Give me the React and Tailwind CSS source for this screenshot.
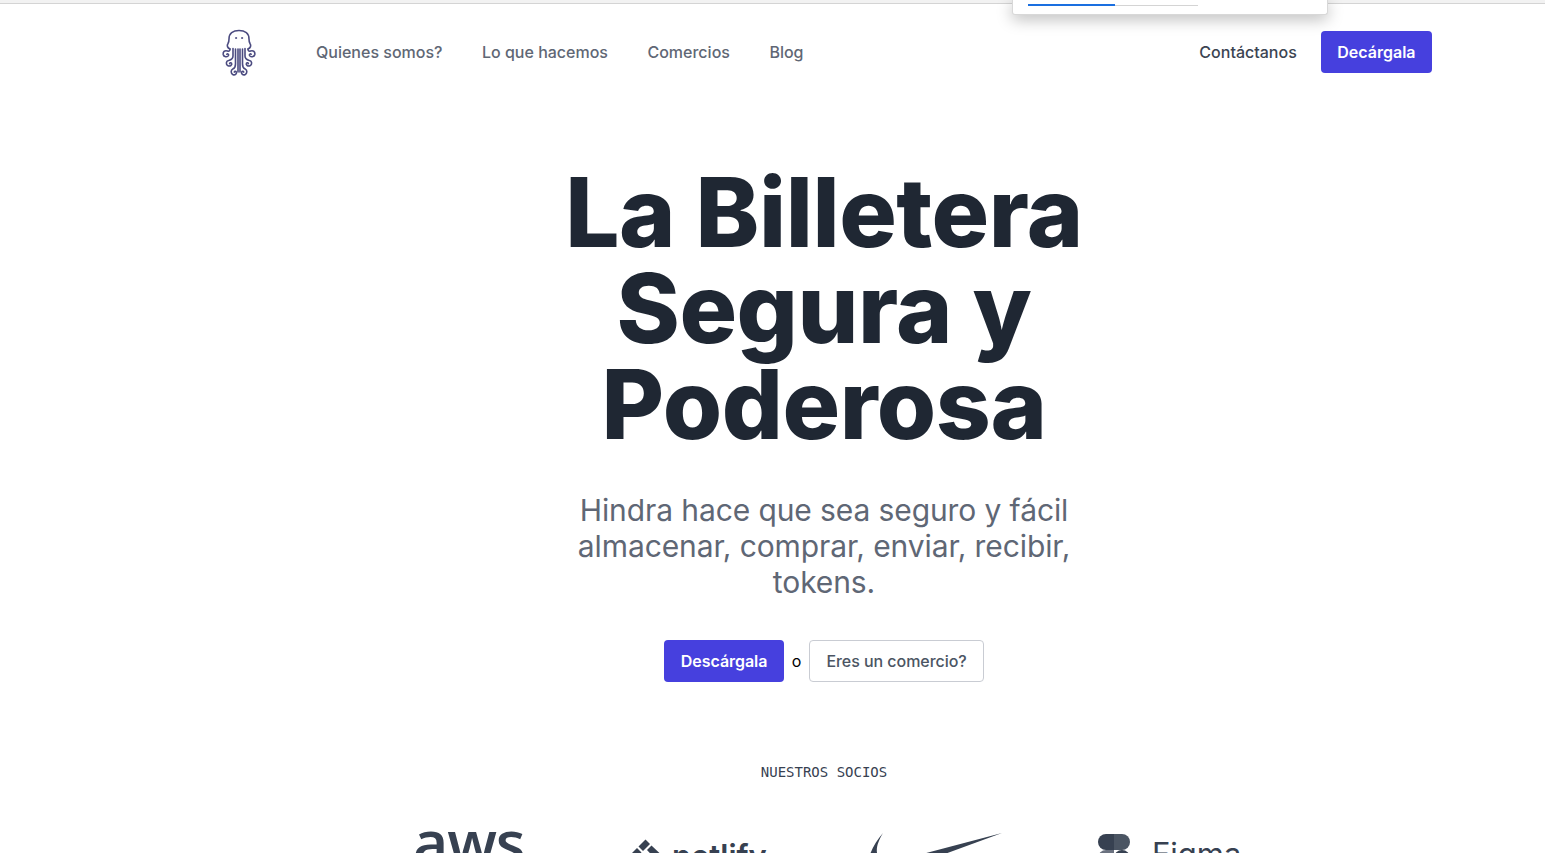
import React from "react";

const navLinks = ["Quienes somos?", "Lo que hacemos", "Comercios", "Blog"];

const OctopusLogo = () => (
  <svg width="34" height="48" viewBox="0 0 34 48" fill="none" stroke="#4b4b80" strokeWidth="1.6" strokeLinecap="round">
    {/* head */}
    <path d="M8 20 C5.5 19 4.5 16.5 6 14.5 C7 13 7 11.5 7 10 C7 4.5 11 1.5 17 1.5 C23 1.5 27 4.5 27 10 C27 11.5 27 13 28 14.5 C29.5 16.5 28.5 19 26 20" />
    <circle cx="14" cy="9" r="0.6" fill="#4b4b80" strokeWidth="0.8" />
    <circle cx="20" cy="9" r="0.6" fill="#4b4b80" strokeWidth="0.8" />
    {/* left arms */}
    <path d="M8 20 C8 22 7 22.5 5.5 22 C2.5 21 0.8 23 1.2 25.5 C1.7 28 5.5 28.5 6.5 26.5 C7 25.3 5.6 24.4 4.8 25.2" />
    <path d="M11 19.5 V27 C11 30.5 8.5 31 6.5 31.5 C4 32 3.5 35.5 6 36.7 C8 37.7 10.5 36 9.5 34.2 C9 33.4 7.7 33.7 7.6 34.6" />
    <path d="M13.5 20 V35 C13.5 38.5 12 39.5 10.8 40 C8.6 41 8.6 44.7 11 45.7 C13 46.5 15 44.8 14.3 43 C13.9 42.1 12.6 42.2 12.3 43.1" />
    <path d="M16 20 V43" />
    {/* right arms */}
    <path d="M26 20 C26 22 27 22.5 28.5 22 C31.5 21 33.2 23 32.8 25.5 C32.3 28 28.5 28.5 27.5 26.5 C27 25.3 28.4 24.4 29.2 25.2" />
    <path d="M23 19.5 V27 C23 30.5 25.5 31 27.5 31.5 C30 32 30.5 35.5 28 36.7 C26 37.7 23.5 36 24.5 34.2 C25 33.4 26.3 33.7 26.4 34.6" />
    <path d="M20.5 20 V35 C20.5 38.5 22 39.5 23.2 40 C25.4 41 25.4 44.7 23 45.7 C21 46.5 19 44.8 19.7 43 C20.1 42.1 21.4 42.2 21.7 43.1" />
    <path d="M18 20 V43" />
  </svg>
);

const NetlifyMark = () => (
  <svg width="30" height="30" viewBox="0 0 30 30" fill="#374151">
    <path d="M14.5 0.5 L19 5 L12 12 L7.5 7.5 Z" />
    <path d="M20.5 6.5 L29.5 15 L24.5 20 L16 11 Z" />
    <path d="M6 9 L10.5 13.5 L5.5 18.5 L0.5 14.5 Z" />
    <path d="M13 14 L18 19 L13 24 L8 19 Z" />
  </svg>
);

const NikeSwoosh = () => (
  <svg width="136" height="40" viewBox="0 0 136 40" fill="#374151">
    <path d="M15 0 C6 11 -2 24 2 34 C6 44 28 38 44 33 L134 0 L62 19 C40 25 16 31 10 23 C7 17 10 8 15 0 Z" />
  </svg>
);

const FigmaMark = () => (
  <svg width="32" height="48" viewBox="0 0 32 48">
    <path d="M16 0 H8 A8 8 0 0 0 8 16 H16 Z" fill="#374151" />
    <path d="M16 0 H24 A8 8 0 0 1 24 16 H16 Z" fill="#4b5563" />
    <path d="M16 16 H8 A8 8 0 0 0 8 32 H16 Z" fill="#6b7280" />
    <circle cx="24" cy="24" r="8" fill="#374151" />
  </svg>
);

export default function App() {
  return (
    <div className="relative h-[853px] w-[1545px] overflow-hidden bg-white font-['Inter',sans-serif]">
      {/* browser chrome remnant */}
      <div className="h-[4px] border-b border-[#d4d4d4] bg-[#f2f2f2]" />

      {/* extension popup laying over the page */}
      <div className="absolute left-[1012px] top-0 h-[15px] w-[316px] rounded-b-[3px] border border-t-0 border-[#d8d8d8] bg-white shadow-[0_4px_16px_rgba(0,0,0,0.28)]">
        <div className="ml-[15px] mt-[5px] flex h-[1px] w-[170px] bg-[#d4d4d4]">
          <div className="h-[2px] -translate-y-[1px] w-[87px] bg-[#1a6fe0]" />
        </div>
      </div>

      <div className="ml-[184px] w-[1280px] px-8">
        <nav className="flex h-[96px] items-center justify-between">
          <div className="flex items-center">
            <div className="ml-[6px] mt-[2px]">
              <OctopusLogo />
            </div>
            <div className="ml-[60px] flex gap-[39.5px]">
              {navLinks.map((link) => (
                <a key={link} className="text-base font-medium text-[#5f6775]">
                  {link}
                </a>
              ))}
            </div>
          </div>
          <div className="flex items-center gap-6">
            <a className="text-base font-medium text-[#3b4452]">Contáctanos</a>
            <button className="h-[42px] rounded bg-[#4640de] px-[16.5px] text-base font-semibold text-white">
              Decárgala
            </button>
          </div>
        </nav>

        <section className="flex flex-col items-center pt-[64px]">
          <h1 className="w-[560px] text-center text-8xl font-extrabold tracking-[-0.45px] text-[#1f2733]">
            La Billetera Segura y Poderosa
          </h1>
          <p className="mt-[40px] w-[520px] text-center text-3xl tracking-[-0.1px] text-[#5f6775]">
            Hindra hace que sea seguro y fácil almacenar, comprar, enviar, recibir, tokens.
          </p>
          <div className="mt-[40px] flex items-center gap-2">
            <button className="h-[42px] rounded bg-[#4640de] px-[16.5px] text-base font-semibold tracking-[-0.05px] text-white">
              Descárgala
            </button>
            <span className="text-base text-black">o</span>
            <button className="h-[42px] rounded border border-[#c9ccd3] bg-white px-[16px] text-base font-medium tracking-[-0.05px] text-[#4b5563]">
              Eres un comercio?
            </button>
          </div>
          <p className="mt-[80px] font-['DejaVu_Sans_Mono',monospace] text-sm text-[#374151]">
            NUESTROS SOCIOS
          </p>
        </section>

        {/* partner logos, cut by the bottom of the window */}
        <div className="mt-[48px] flex items-start pl-[197px]">
          <span className="-mt-[18px] w-[218px] font-['Open_Sans',sans-serif] text-[61px] leading-[60px] font-semibold tracking-[-0.02em] text-[#374151]">
            aws
          </span>
          <div className="flex w-[237px] items-start gap-[11px] pt-[9px]">
            <NetlifyMark />
            <span className="pt-[1px] text-[31px] leading-[32px] font-semibold text-[#374151]">netlify</span>
          </div>
          <div className="w-[230px] pt-[3px]">
            <NikeSwoosh />
          </div>
          <div className="flex items-start gap-[22px] pt-[4px]">
            <FigmaMark />
            <span className="text-[31px] leading-[40px] text-[#374151]">Figma</span>
          </div>
        </div>
      </div>
    </div>
  );
}
